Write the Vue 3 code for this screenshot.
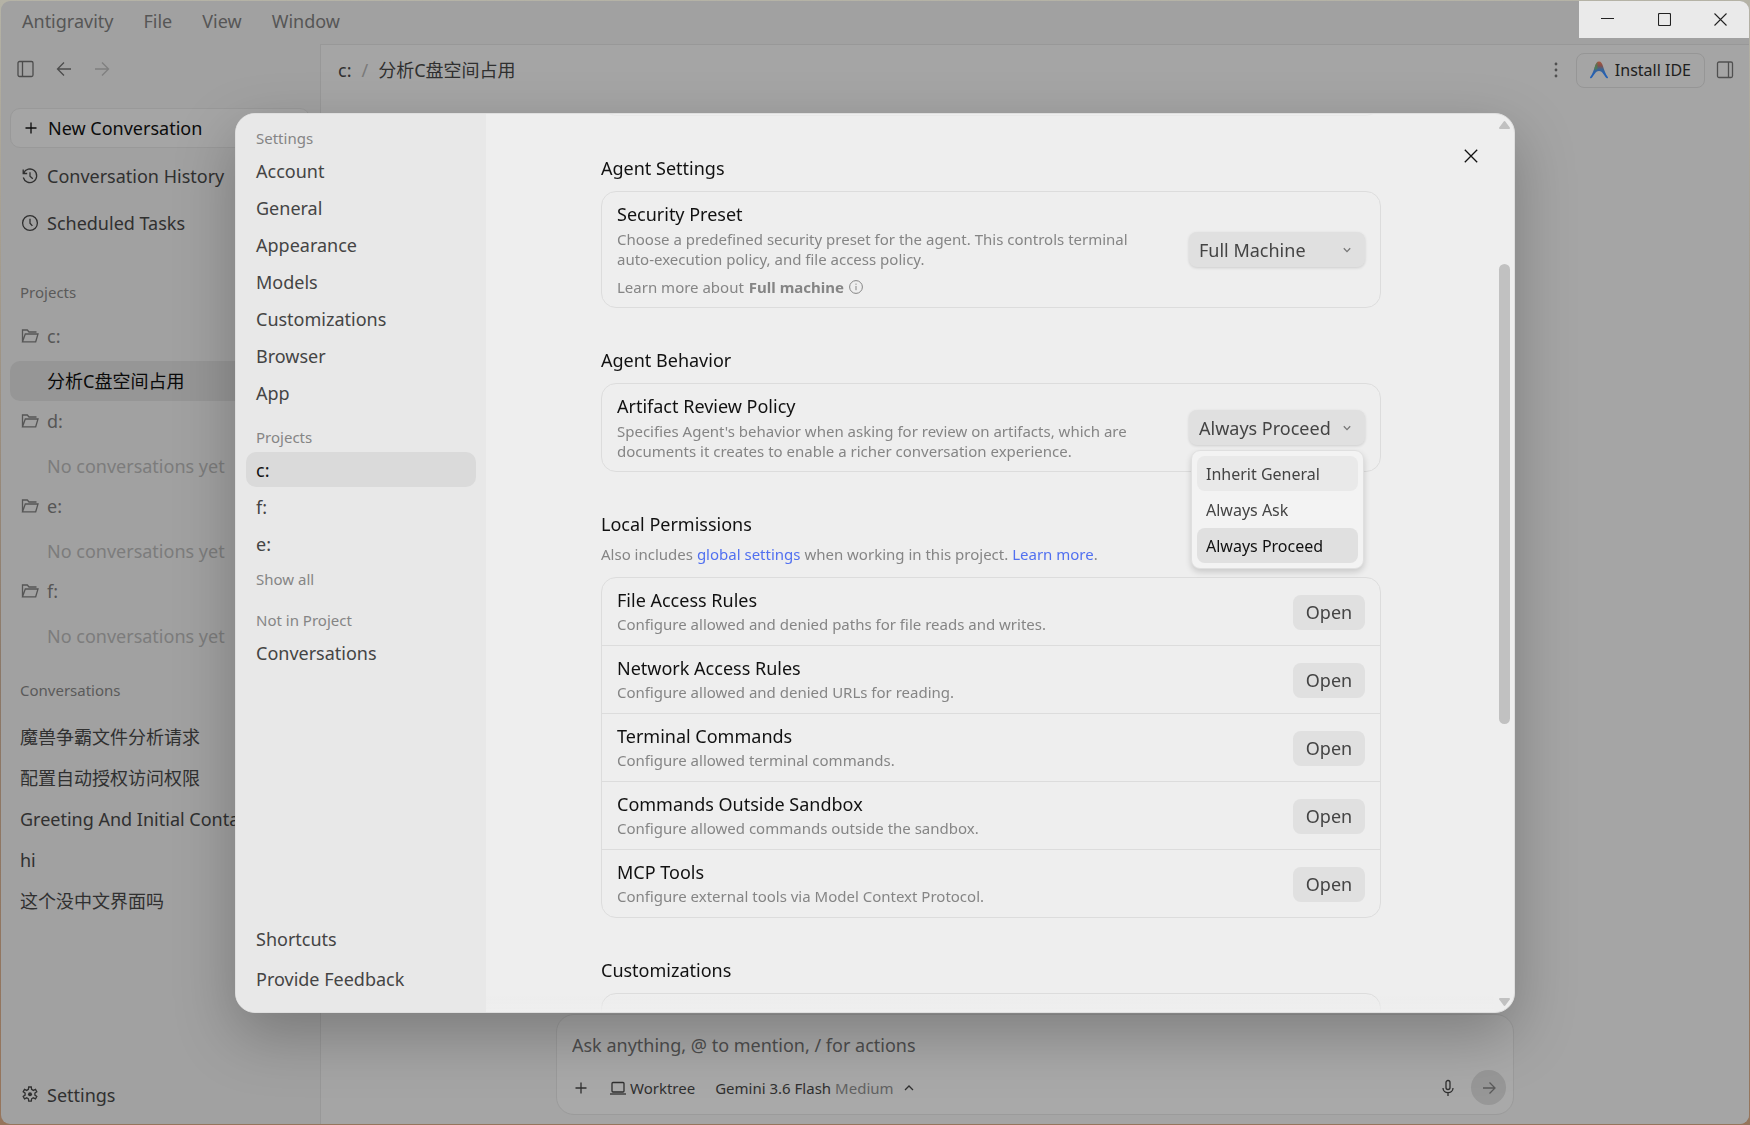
<script setup>
import { ref } from 'vue'

const menus = ['Antigravity', 'File', 'View', 'Window']

const projects = ref([
    { name: 'c:', conversations: ['分析C盘空间占用'] },
    { name: 'd:', conversations: [] },
    { name: 'e:', conversations: [] },
    { name: 'f:', conversations: [] }
])

const conversations = ref([
    '魔兽争霸文件分析请求',
    '配置自动授权访问权限',
    'Greeting And Initial Contact',
    'hi',
    '这个没中文界面吗'
])

const settingsPages = ['Account', 'General', 'Appearance', 'Models', 'Customizations', 'Browser', 'App']
const projectPages = ['c:', 'f:', 'e:']
const currentPage = ref('c:')

const presets = ['Full Machine', 'Default', 'Strict']
const preset = ref('Full Machine')

const policies = ['Inherit General', 'Always Ask', 'Always Proceed']
const policy = ref('Always Proceed')
const policyOpen = ref(true)
const hovered = ref('Inherit General')

const rules = [
    { title: 'File Access Rules', text: 'Configure allowed and denied paths for file reads and writes.' },
    { title: 'Network Access Rules', text: 'Configure allowed and denied URLs for reading.' },
    { title: 'Terminal Commands', text: 'Configure allowed terminal commands.' },
    { title: 'Commands Outside Sandbox', text: 'Configure allowed commands outside the sandbox.' },
    { title: 'MCP Tools', text: 'Configure external tools via Model Context Protocol.' }
]

const prompt = ref('')
const scroll = ref({ top: 15.5, size: 53 })

function choosePolicy(value) {
    policy.value = value
    policyOpen.value = false
}
</script>

<template>
    <div class="desktop">
        <div class="window">
            <header class="titlebar">
                <nav class="menus">
                    <button v-for="menu in menus" :key="menu">{{ menu }}</button>
                </nav>
                <div class="window-controls">
                    <button aria-label="Minimize">
                        <svg width="13" height="13" viewBox="0 0 13 13"><path d="M0 5.5h13" /></svg>
                    </button>
                    <button aria-label="Maximize">
                        <svg width="13" height="13" viewBox="0 0 13 13"><rect x=".5" y=".5" width="12" height="12" rx="1" /></svg>
                    </button>
                    <button aria-label="Close">
                        <svg width="13" height="13" viewBox="0 0 13 13"><path d="M.5.5l12 12M12.5.5l-12 12" /></svg>
                    </button>
                </div>
            </header>

            <div class="body">
                <aside class="sidebar">
                    <div class="side-tools">
                        <button aria-label="Toggle sidebar">
                            <svg width="18" height="18" viewBox="0 0 18 18"><rect x="1" y="1.500" width="15" height="15" rx="1.500" /><path d="M5.500 1.500v15" /></svg>
                        </button>
                        <button aria-label="Back">
                            <svg width="18" height="18" viewBox="0 0 18 18"><path d="M16 9H2.500M9 2.500L2.500 9L9 15.500" /></svg>
                        </button>
                        <button class="dim" aria-label="Forward">
                            <svg width="18" height="18" viewBox="0 0 18 18"><path d="M2 9h13.500M9 2.500L15.500 9L9 15.500" /></svg>
                        </button>
                    </div>

                    <button class="new-conversation">
                        <svg width="18" height="18" viewBox="0 0 18 18"><path d="M9 3.500v11M3.500 9h11" /></svg>
                        New Conversation
                    </button>
                    <button class="side-link">
                        <svg width="18" height="18" viewBox="0 0 18 18"><path d="M2.600 6.200A6.800 6.800 0 1 1 2.300 10.500M2.200 2.500v4h4M9 5.200V9.300l2.800 2.400" /></svg>
                        Conversation History
                    </button>
                    <button class="side-link">
                        <svg width="18" height="18" viewBox="0 0 18 18"><circle cx="9" cy="9" r="7.400" /><path d="M9 4.800V9.300l2.400 2.600" /></svg>
                        Scheduled Tasks
                    </button>

                    <h2 class="side-label projects-label">Projects</h2>
                    <section v-for="(project, i) in projects" :key="project.name" class="project">
                        <button class="folder">
                            <svg width="18" height="18" viewBox="0 0 18 18"><path d="M1.500 14.800V3h4.800l1.700 2h7.500M1.500 14.800L4.300 7H17l-2.300 7.800z" /></svg>
                            {{ project.name }}
                        </button>
                        <button v-for="item in project.conversations" :key="item" class="entry" :class="{ selected: i === 0 }">{{ item }}</button>
                        <p v-if="!project.conversations.length" class="entry empty">No conversations yet</p>
                    </section>

                    <h2 class="side-label conversations-label">Conversations</h2>
                    <button v-for="item in conversations" :key="item" class="conversation">{{ item }}</button>

                    <button class="side-link settings-link">
                        <svg width="18" height="18" viewBox="0 0 18 18">
                            <path d="M7.400 3.400L7.700 1h2.600l.3 2.400 1.700 1 2.200-1 1.300 2.300-1.900 1.400v2l1.900 1.400-1.300 2.300-2.200-1-1.700 1-.3 2.400H7.700l-.3-2.400-1.700-1-2.200 1-1.300-2.300 1.900-1.400v-2L2.200 5.700l1.300-2.300 2.200 1z" />
                            <circle class="solid" cx="9" cy="8.200" r="2" />
                        </svg>
                        Settings
                    </button>
                </aside>

                <main class="main">
                    <header class="topbar">
                        <div class="crumbs">
                            <span>c:</span><span class="slash">/</span><span>分析C盘空间占用</span>
                        </div>
                        <div class="top-actions">
                            <button aria-label="More">
                                <svg width="18" height="18" viewBox="0 0 18 18"><g class="solid"><circle cx="9" cy="3" r="1.400" /><circle cx="9" cy="9" r="1.400" /><circle cx="9" cy="15" r="1.400" /></g></svg>
                            </button>
                            <button class="install">
                                <svg width="18" height="18" viewBox="0 0 18 18">
                                    <defs>
                                        <linearGradient id="rise" x1="0" y1="0" x2="0" y2="1">
                                            <stop offset="0" stop-color="#a8573c" />
                                            <stop offset=".25" stop-color="#85504a" />
                                            <stop offset=".45" stop-color="#3d6490" />
                                            <stop offset=".75" stop-color="#2460b4" />
                                        </linearGradient>
                                        <linearGradient id="left" x1="0" y1="0" x2="1" y2="0">
                                            <stop offset=".3" stop-color="#4c7f55" />
                                            <stop offset=".9" stop-color="#4c7f55" stop-opacity="0" />
                                        </linearGradient>
                                    </defs>
                                    <path class="mark" fill="url(#rise)" d="M9 .5c2.200 0 3.200 2 4.100 5 1.100 3.800 2.500 7.600 4.700 10.500.7 1-.4 1.800-1.400 1-2-1.600-3.600-7-7.400-7s-5.400 5.400-7.400 7c-1 .8-2.100 0-1.400-1 2.200-2.900 3.600-6.700 4.700-10.500C5.800 2.500 6.800.5 9 .5z" />
                                    <path class="mark" fill="url(#left)" d="M8 1C6.300 1.800 5.500 3.500 4.500 7l.5 2 4-1.500z" />
                                </svg>
                                Install IDE
                            </button>
                            <button aria-label="Toggle side panel">
                                <svg width="18" height="18" viewBox="0 0 18 18"><rect x="1.500" y="1" width="15" height="15.500" rx="1.500" /><path d="M12.500 1v15.500" /></svg>
                            </button>
                        </div>
                    </header>

                    <form class="composer" @submit.prevent>
                        <input v-model="prompt" aria-label="Message" placeholder="Ask anything, @ to mention, / for actions">
                        <div class="composer-row">
                            <button type="button" aria-label="Add">
                                <svg width="18" height="18" viewBox="0 0 18 18"><path d="M9 3.500v11M3.500 9h11" /></svg>
                            </button>
                            <button type="button" class="worktree">
                                <svg width="16" height="16" viewBox="0 0 16 16"><rect x="2" y="2.500" width="12" height="9.500" rx="1" /><path d="M0 14h16" /></svg>
                                Worktree
                            </button>
                            <button type="button" class="model">
                                Gemini 3.6 Flash <span>Medium</span>
                                <svg width="10" height="10" viewBox="0 0 10 10"><path d="M1 7l4-4 4 4" /></svg>
                            </button>
                            <button type="button" class="mic" aria-label="Dictate">
                                <svg width="16" height="18" viewBox="0 0 16 18"><rect x="6" y="1.500" width="4" height="9" rx="2" /><path d="M3 9c0 6.200 10 6.200 10 0M8 13.700V17" /></svg>
                            </button>
                            <button class="send" aria-label="Send">
                                <svg width="16" height="16" viewBox="0 0 16 16"><path d="M2 8h12M8.500 2.500L14 8l-5.500 5.500" /></svg>
                            </button>
                        </div>
                    </form>
                </main>
            </div>
        </div>

        <div class="dialog-layer">
            <div class="dialog" role="dialog" aria-label="Settings">
                <nav class="pages">
                    <h3>Settings</h3>
                    <button v-for="page in settingsPages" :key="page" :class="{ active: page === currentPage }" @click="currentPage = page">{{ page }}</button>
                    <h3 class="spaced">Projects</h3>
                    <button v-for="page in projectPages" :key="page" :class="{ active: page === currentPage }" @click="currentPage = page">{{ page }}</button>
                    <button class="show-all">Show all</button>
                    <h3 class="spaced">Not in Project</h3>
                    <button>Conversations</button>
                    <div class="pages-footer">
                        <button>Shortcuts</button>
                        <button>Provide Feedback</button>
                    </div>
                </nav>

                <div class="content">
                    <div class="sheet">
                        <div class="card previous"></div>

                        <h2>Agent Settings</h2>
                        <div class="card">
                            <div class="row">
                                <div class="info">
                                    <label for="preset">Security Preset</label>
                                    <p>Choose a predefined security preset for the agent. This controls terminal auto-execution policy, and file access policy.</p>
                                    <p class="more">
                                        Learn more about <b>Full machine</b>
                                        <svg width="14" height="14" viewBox="0 0 14 14"><circle cx="7" cy="7" r="6.400" /><path d="M7 6v4.200M7 3.600v1.200" /></svg>
                                    </p>
                                </div>
                                <div class="select">
                                    <select id="preset" v-model="preset">
                                        <option v-for="item in presets" :key="item">{{ item }}</option>
                                    </select>
                                    <svg width="8" height="8" viewBox="0 0 8 8"><path d="M.8 2.200L4 5.600l3.200-3.400" /></svg>
                                </div>
                            </div>
                        </div>

                        <h2>Agent Behavior</h2>
                        <div class="card">
                            <div class="row">
                                <div class="info">
                                    <label for="policy">Artifact Review Policy</label>
                                    <p>Specifies Agent's behavior when asking for review on artifacts, which are documents it creates to enable a richer conversation experience.</p>
                                </div>
                                <div class="select">
                                    <select id="policy" v-model="policy" @mousedown.prevent="policyOpen = !policyOpen">
                                        <option v-for="item in policies" :key="item">{{ item }}</option>
                                    </select>
                                    <svg width="8" height="8" viewBox="0 0 8 8"><path d="M.8 2.200L4 5.600l3.200-3.400" /></svg>
                                    <div v-if="policyOpen" class="popup">
                                        <button v-for="item in policies" :key="item" :class="{ hovered: item === hovered, chosen: item === policy }" @mouseenter="hovered = item" @click="choosePolicy(item)">{{ item }}</button>
                                    </div>
                                </div>
                            </div>
                        </div>

                        <h2 class="with-note">Local Permissions</h2>
                        <p class="note">Also includes <a href="#">global settings</a> when working in this project. <a href="#">Learn more</a>.</p>
                        <div class="card">
                            <div v-for="rule in rules" :key="rule.title" class="row rule">
                                <div class="info">
                                    <h4>{{ rule.title }}</h4>
                                    <p>{{ rule.text }}</p>
                                </div>
                                <button class="open">Open</button>
                            </div>
                        </div>

                        <h2>Customizations</h2>
                        <div class="card next"></div>
                    </div>

                    <button class="close" aria-label="Close settings">
                        <svg width="14" height="14" viewBox="0 0 14 14"><path d="M.8.8l12.400 12.400M13.200.8L.8 13.200" /></svg>
                    </button>

                    <div class="scrollbar">
                        <svg width="13" height="10" viewBox="0 0 13 10"><path d="M6.500 2L11 8H2z" /></svg>
                        <div class="track">
                            <div class="thumb" :style="{ top: scroll.top + '%', height: scroll.size + '%' }"></div>
                        </div>
                        <svg width="13" height="10" viewBox="0 0 13 10"><path d="M6.500 8L2 2h9z" /></svg>
                    </div>
                </div>
            </div>
        </div>
    </div>
</template>

<style>
    body {
        margin: 0;
        overflow: hidden;
    }
</style>

<style scoped>
    .desktop {
        height: 100vh;
        padding: 1px;
        box-sizing: border-box;
        background: linear-gradient(#b5b3a6, #8b7868 60%, #96755c);
        font-family: "Noto Sans", "Noto Sans CJK SC", sans-serif;
        font-size: 18px;
        line-height: 24px;
        color: #303030;
    }

    .desktop *, .desktop *::after {
        box-sizing: border-box;
    }

    h2, h3, h4, p {
        margin: 0;
        font-size: inherit;
        font-weight: 400;
    }

    button, input, select {
        font: inherit;
        color: inherit;
        background: none;
        border: none;
        padding: 0;
        margin: 0;
        text-align: left;
    }

    svg {
        flex: none;
        display: block;
        fill: none;
        stroke: currentColor;
        stroke-width: 1.3;
    }

    .solid {
        fill: currentColor;
        stroke: none;
    }

    .mark {
        stroke: none;
    }

    .window {
        height: 100%;
        display: flex;
        flex-direction: column;
        border-radius: 9px;
        overflow: hidden;
        background: #a1a1a1;
    }

    /* title bar */
    .titlebar {
        height: 43px;
        flex: none;
        display: flex;
        justify-content: space-between;
        align-items: flex-start;
    }

    .menus {
        display: flex;
        gap: 30px;
        padding: 8px 21px;
        color: #565656;
    }

    .window-controls {
        display: flex;
        width: 170px;
        height: 37px;
        background: #eaeaea;
        color: #222;
    }

    .window-controls button {
        flex: 1;
        display: grid;
        place-items: center;
    }

    .window-controls svg {
        stroke-width: 1.1;
    }

    .body {
        flex: 1;
        min-height: 0;
        display: flex;
    }

    /* sidebar */
    .sidebar {
        width: 319px;
        flex: none;
        display: flex;
        flex-direction: column;
        padding: 0 10px 9px 9px;
        white-space: nowrap;
    }

    .side-tools {
        display: flex;
        gap: 20px;
        height: 50px;
        padding: 0 7px;
        align-items: center;
        color: #4c4c4c;
    }

    .side-tools .dim {
        color: #7f7f7f;
    }

    .new-conversation, .side-link {
        display: flex;
        align-items: center;
        gap: 8px;
        flex: none;
        height: 40px;
        padding: 0 11px;
        border-radius: 10px;
    }

    .new-conversation {
        margin: 14px 0 8px;
        border: 1px solid #999;
        background: #a5a5a5;
        color: #0c0c0c;
    }

    .side-link + .side-link {
        margin-top: 7px;
    }

    .desktop .settings-link {
        margin-top: auto;
    }

    .side-label {
        flex: none;
        font-size: 15px;
        padding: 0 10px;
        color: #5a5a5a;
    }

    .projects-label {
        margin: 37px 0 12px;
    }

    .project {
        flex: none;
        display: flex;
        flex-direction: column;
        gap: 5px;
        color: #565656;
    }

    .folder {
        display: flex;
        align-items: center;
        gap: 8px;
        height: 40px;
        padding: 0 11px;
    }

    .entry {
        height: 40px;
        line-height: 40px;
        padding: 0 37px;
        border-radius: 10px;
    }

    .empty {
        color: #7c7c7c;
    }

    .selected {
        background: #969696;
        color: #0a0a0a;
    }

    .conversations-label {
        margin: 22px 0 14px;
    }

    .conversation {
        flex: none;
        height: 41px;
        padding: 0 10px;
        overflow: hidden;
        text-overflow: ellipsis;
    }

    /* main area */
    .main {
        flex: 1;
        min-width: 0;
        display: flex;
        flex-direction: column;
        justify-content: space-between;
        border: solid #989898;
        border-width: 1px 0 0 1px;
        background: #a5a5a5;
    }

    .topbar {
        display: flex;
        justify-content: space-between;
        align-items: center;
        height: 50px;
        padding: 0 15px 0 17px;
        white-space: nowrap;
    }

    .crumbs {
        display: flex;
        gap: 10px;
    }

    .slash {
        color: #7a7a7a;
    }

    .top-actions {
        display: flex;
        align-items: center;
        gap: 11px;
        color: #505050;
    }

    .install {
        display: flex;
        align-items: center;
        gap: 7px;
        height: 35px;
        padding: 0 13px;
        border: 1px solid #969696;
        border-radius: 8px;
        font-size: 16px;
        color: #202020;
    }

    .composer {
        width: 958px;
        max-width: 90%;
        align-self: center;
        margin-bottom: 9px;
        padding: 18px 7px 9px 15px;
        border: 1px solid #9b9b9b;
        border-radius: 18px;
        background: #a9a9a9;
    }

    .composer input {
        display: block;
        width: 100%;
        height: 24px;
        outline: none;
    }

    .composer input::placeholder {
        color: #4e4e4e;
        opacity: 1;
    }

    .composer-row {
        display: flex;
        align-items: center;
        margin-top: 13px;
        font-size: 15px;
        white-space: nowrap;
    }

    .worktree, .model {
        display: flex;
        align-items: center;
        gap: 4px;
        margin-left: 20px;
    }

    .model span {
        color: #626262;
    }

    .model svg {
        margin-left: 6px;
    }

    .mic {
        margin: 0 15px 0 auto;
    }

    .send {
        display: grid;
        place-items: center;
        width: 35px;
        height: 35px;
        border-radius: 50%;
        background: #979797;
        color: #5a5a5a;
    }

    /* settings dialog */
    .dialog-layer {
        position: fixed;
        inset: 1px 0 0;
        display: grid;
        place-items: center;
    }

    .dialog {
        display: flex;
        width: 1280px;
        max-width: 94vw;
        height: 80vh;
        border: 1px solid #dedede;
        border-radius: 20px;
        overflow: hidden;
        background: #eee;
        box-shadow: 0 22px 60px rgba(0, 0, 0, .25);
        color: #444;
    }

    .pages {
        width: 250px;
        flex: none;
        display: flex;
        flex-direction: column;
        gap: 2px;
        padding: 12px 10px 16px;
        background: #e8e8e8;
    }

    .pages h3, .pages .show-all {
        font-size: 15px;
        line-height: 24px;
        padding: 0 10px;
        color: #858585;
    }

    .pages h3 {
        margin-bottom: 1px;
    }

    .pages button {
        height: 35px;
        flex: none;
        padding: 0 10px;
        border-radius: 10px;
    }

    .pages .show-all {
        height: 28px;
        margin-top: 2px;
    }

    .pages .spaced {
        margin-top: 13px;
    }

    .pages .active {
        background: #dadada;
        color: #111;
    }

    .pages-footer {
        display: flex;
        flex-direction: column;
        gap: 5px;
        margin-top: auto;
    }

    .content {
        flex: 1;
        min-width: 0;
        position: relative;
        overflow: hidden;
        padding-right: 18px;
    }

    /* content fades out at the lower edge */
    .content::after {
        content: "";
        position: absolute;
        left: 0;
        right: 20px;
        bottom: 0;
        height: 16px;
        background: linear-gradient(rgba(238, 238, 238, 0), #eee);
    }

    .sheet {
        max-width: 780px;
        margin: 0 auto;
    }

    .sheet h2 {
        margin-bottom: 11px;
        color: #111;
    }

    .card {
        margin-bottom: 40px;
        border: 1px solid #dcdcdc;
        border-radius: 15px;
    }

    .previous {
        height: 60px;
        margin-top: -58px;
        border-color: #e8e8e8;
    }

    .next {
        height: 60px;
    }

    .row {
        display: flex;
        align-items: center;
        justify-content: space-between;
        padding: 10px 15px;
    }

    .rule {
        padding-bottom: 9px;
    }

    .rule + .rule {
        border-top: 1px solid #dcdcdc;
    }

    .info {
        width: 535px;
    }

    .info label, .info h4 {
        display: block;
        color: #111;
    }

    .info label {
        margin-bottom: 3px;
    }

    .info p, .note {
        font-size: 15px;
        line-height: 20px;
        color: #858585;
    }

    .rule .info p {
        line-height: 24px;
    }

    .info .more {
        display: flex;
        align-items: center;
        gap: 5px;
        margin-top: 8px;
    }

    .more svg {
        stroke-width: 1;
    }

    .sheet .with-note {
        margin-bottom: 8px;
    }

    .note {
        margin-bottom: 13px;
    }

    .note a {
        color: #5170f0;
        text-decoration: none;
    }

    .select {
        position: relative;
        width: 176px;
    }

    .select select {
        appearance: none;
        width: 100%;
        height: 35px;
        padding: 0 10px;
        border-radius: 8px;
        background: #e0e0e0;
        box-shadow: 0 1px 3px rgba(0, 0, 0, .14);
        outline: none;
    }

    .select > svg {
        position: absolute;
        right: 14px;
        top: 14px;
        color: #777;
        pointer-events: none;
    }

    .popup {
        position: absolute;
        z-index: 1;
        top: 40px;
        left: 2px;
        right: 1px;
        display: flex;
        flex-direction: column;
        gap: 1px;
        padding: 5px;
        border: 1px solid #dfdfdf;
        border-radius: 9px;
        background: #f3f3f3;
        box-shadow: 0 3px 6px rgba(0, 0, 0, .16);
        font-size: 16px;
    }

    .popup button {
        height: 35px;
        padding: 0 9px;
        border-radius: 8px;
    }

    .popup .hovered {
        background: #e9e9e9;
    }

    .popup .chosen {
        background: #e0e0e0;
        color: #111;
    }

    .open {
        width: 72px;
        height: 35px;
        border-radius: 8px;
        background: #e0e0e0;
        text-align: center;
    }

    .close {
        position: absolute;
        top: 24px;
        right: 25px;
        padding: 11px;
        color: #111;
    }

    .scrollbar {
        position: absolute;
        top: 6px;
        right: 3px;
        bottom: 5px;
        width: 13px;
        display: flex;
        flex-direction: column;
        color: #c1c1c1;
    }

    .scrollbar path {
        fill: currentColor;
        stroke-width: 2;
        stroke-linejoin: round;
    }

    .track {
        flex: 1;
        position: relative;
    }

    .thumb {
        position: absolute;
        left: 1px;
        width: 11px;
        border-radius: 6px;
        background: #c1c1c1;
    }
</style>
